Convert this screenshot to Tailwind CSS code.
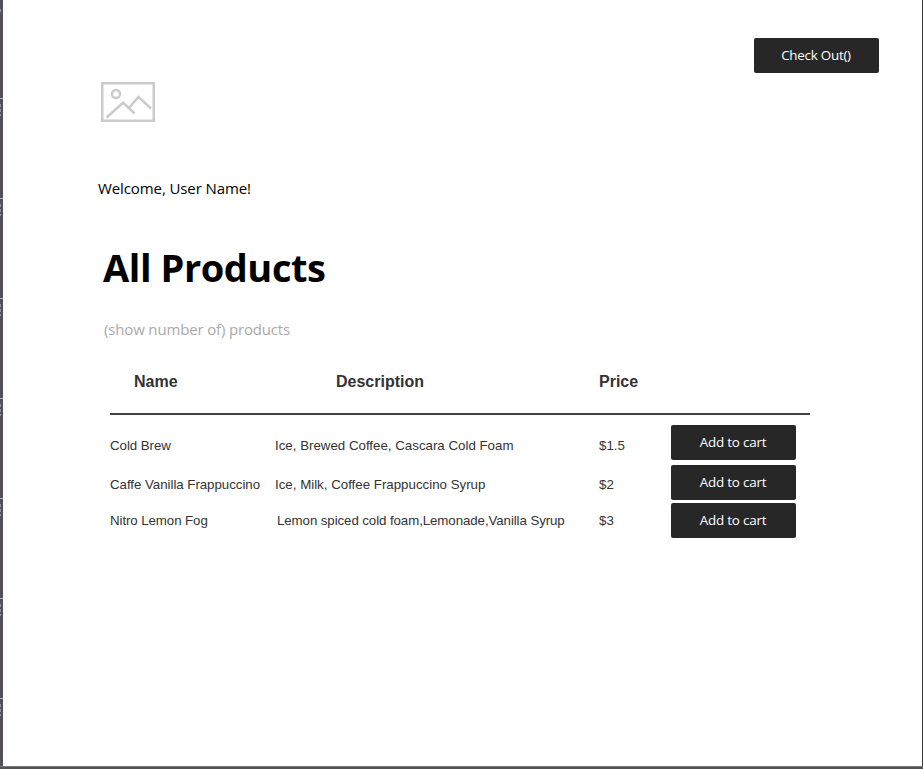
<!DOCTYPE html>
<html lang="en">
<head>
<meta charset="utf-8">
<title>All Products</title>
<script src="https://cdn.jsdelivr.net/npm/@tailwindcss/browser@4"></script>
</head>
<body class="flex h-[769px] w-[923px] flex-col overflow-hidden bg-white font-['Open_Sans',sans-serif]">
<div class="flex h-[766px]">
  <!-- ruler -->
  <svg class="h-[766px] w-[3px] shrink-0 bg-[#535157]" viewBox="0 0 3 766" shape-rendering="crispEdges">
    <defs><g id="t"><path d="M0 0h3v1H0z" fill="#a9b4b8"/><path d="M0 6h1v3H0zM0 11h1v3H0zM0 16h1v2H0z" fill="#8f9197"/></g></defs>
    <path d="M0 9h1v3H0z" fill="#8f9197"/>
    <use href="#t" y="98"/><use href="#t" y="198"/><use href="#t" y="298"/><use href="#t" y="398"/><use href="#t" y="498"/><use href="#t" y="598"/><use href="#t" y="698"/>
  </svg>
  <main class="flex w-[919px] flex-col">
    <header class="flex h-[73px] items-end justify-end pr-[43px]">
      <button class="h-[35px] w-[125px] rounded-[2px] bg-[#272727] pr-px pb-px text-[13.4px] leading-8 tracking-[-0.25px] text-white"><span>Check Out()</span></button>
    </header>
    <svg class="mt-[9px] ml-[98px] h-10 w-[54px]" viewBox="0 0 54 40" fill="none" stroke="#cbcbcb" stroke-width="2.5">
      <rect x="1.25" y="1.25" width="51.5" height="37.500"/><circle cx="15" cy="12" r="4"/><path d="M5.500 35.500 22.200 20.800 33.500 31.500M27.500 26.500 37.500 15 50 26.500"/>
    </svg>
    <p class="mt-[56px] ml-[95px] h-5 text-[15px] leading-5 tracking-[-0.1px] text-black"><span>Welcome, User Name!</span></p>
    <h1 class="mt-[43px] ml-[100px] h-[52px] text-[38px] leading-[52px] font-bold tracking-[-0.45px] text-black"><span>All Products</span></h1>
    <p class="mt-[26px] ml-[101px] h-5 text-[15px] leading-5 tracking-[-0.16px] text-[#aaa]"><span>(show number of) products</span></p>
    <section class="ml-[107px] w-[700px] font-['Liberation_Sans',Arial,sans-serif] text-[13.3px] text-[#333]">
      <div class="grid h-[76px] grid-cols-[202px_263px_1fr] border-b-2 border-[#404040] pt-[33px] pl-6 text-[16px] leading-5 font-bold">
        <div><span>Name</span></div><div><span>Description</span></div><div><span>Price</span></div>
      </div>
      <div class="mt-[10px] grid h-[35px] grid-cols-[165px_324px_72px_125px] leading-[41px]">
        <div class="tracking-[-0.06px]"><span>Cold Brew</span></div><div><span>Ice, Brewed Coffee, Cascara Cold Foam</span></div><div><span>$1.5</span></div>
        <button class="h-[35px] rounded-[2px] bg-[#272727] pr-px pb-px font-['Open_Sans',sans-serif] text-[13.4px] leading-8 tracking-[-0.2px] text-white"><span>Add to cart</span></button>
      </div>
      <div class="mt-[5px] grid h-[35px] grid-cols-[165px_324px_72px_125px] leading-[39px]">
        <div class="tracking-[-0.04px]"><span>Caffe Vanilla Frappuccino</span></div><div><span>Ice, Milk, Coffee Frappuccino Syrup</span></div><div><span>$2</span></div>
        <button class="h-[35px] rounded-[2px] bg-[#272727] pr-px pb-px font-['Open_Sans',sans-serif] text-[13.4px] leading-8 tracking-[-0.2px] text-white"><span>Add to cart</span></button>
      </div>
      <div class="mt-[3px] grid h-[35px] grid-cols-[167px_322px_72px_125px] leading-[35px]">
        <div class="tracking-[-0.09px]"><span>Nitro Lemon Fog</span></div><div class="tracking-[-0.09px]"><span>Lemon spiced cold foam,Lemonade,Vanilla Syrup</span></div><div><span>$3</span></div>
        <button class="h-[35px] rounded-[2px] bg-[#272727] pr-px pb-px font-['Open_Sans',sans-serif] text-[13.4px] leading-8 tracking-[-0.2px] text-white"><span>Add to cart</span></button>
      </div>
    </section>
  </main>
  <div class="w-px bg-[#3c3a3e]"></div>
</div>
<div class="h-[3px] border-t border-[#78777b] bg-[#535157]"></div>
</body>
</html>
